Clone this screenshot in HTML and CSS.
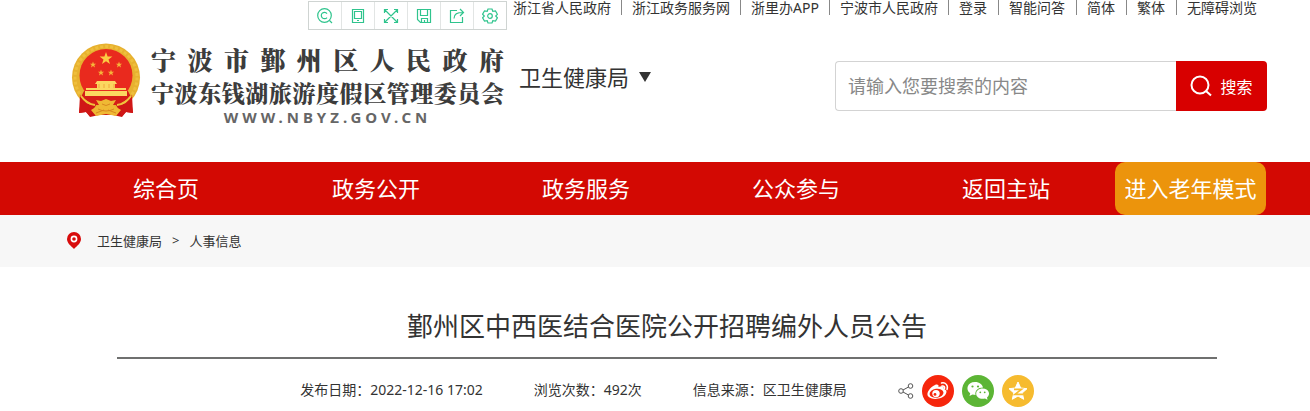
FILE: index.html
```html
<!DOCTYPE html>
<html lang="zh-CN">
<head>
    <meta charset="UTF-8">
    <title>鄞州区中西医结合医院公开招聘编外人员公告</title>
    <link rel="stylesheet" href="styles.css">
</head>
<body>

    <div class="topbar">
        <div class="toolbar">
            <button type="button" aria-label="识别"><svg viewBox="0 0 16 16"><circle cx="7.500" cy="7.500" r="6.800"/><path d="M10 5.500A3.200 3.200 0 1 0 10 9.500M12.500 12.500L15 15"/></svg></button>
            <button type="button" aria-label="手机"><svg viewBox="0 0 16 16"><path d="M2.500 1.500h11v13h-11zM4.500 3.500h7v7h-7zM7 12.500h2"/></svg></button>
            <button type="button" aria-label="全屏"><svg viewBox="0 0 16 16"><path d="M2 2l12 12M14 2L2 14M1.500 5V1.500H5M11 1.500h3.500V5M14.500 11v3.500H11M5 14.500H1.500V11"/></svg></button>
            <button type="button" aria-label="保存"><svg viewBox="0 0 16 16"><path d="M1.500 1.500h13v13h-10l-3-3zM4.500 2v5.500h7V2M5.500 14v-3.500h6V14M8.500 12v2"/></svg></button>
            <button type="button" aria-label="分享"><svg viewBox="0 0 16 16"><path d="M8 2.500H1.500v12h12V9M5 10.500C5 6 8 4.500 14 4.500M11 1l3.500 3.500L11 8"/></svg></button>
            <button type="button" aria-label="设置"><svg viewBox="0 0 16 16"><path d="M6 1h4l.8 2.300 2.700-.4 1.900 3.400L13.700 8l1.700 1.800-1.900 3.300-2.700-.4L10 15H6l-.8-2.300-2.700.4L.6 9.800 2.300 8 .6 6.200l1.900-3.300 2.700.4z"/><circle cx="8" cy="8" r="2.300"/></svg></button>
        </div>
        <div class="top-links">
            <a href="#">浙江省人民政府</a>
            <a href="#">浙江政务服务网</a>
            <a href="#">浙里办APP</a>
            <a href="#">宁波市人民政府</a>
            <a href="#">登录</a>
            <a href="#">智能问答</a>
            <a href="#">简体</a>
            <a href="#">繁体</a>
            <a href="#">无障碍浏览</a>
        </div>
    </div>

    <div class="header">
        <a href="#" class="logo">
            <svg class="emblem" viewBox="0 0 70 75">
                <path d="M11 51L8 70l7-1 4 5 9-2h14l9 2 4-5 7 1-3-19z" fill="#c91413"/>
                <circle cx="35" cy="34.500" r="34" fill="#e7b12f"/>
                <circle cx="35" cy="34.500" r="31" fill="none" stroke="#efbf3d" stroke-width="3" stroke-dasharray="3 2"/>
                <circle cx="35" cy="32.500" r="26.500" fill="#e92a1e"/>
                <path d="M13 48h44l3 6-12 8H22l-12-8z" fill="#d51d18"/>
                <path d="M35 9l1.600 4.500h4.800l-3.900 2.900 1.500 4.600-4-2.800-4 2.800 1.500-4.600-3.900-2.900h4.800z" fill="#fccb42"/>
                <g fill="#f6b63a">
                    <path id="star" d="M22 18.500l.8 2.200h2.400l-1.900 1.400.7 2.300-2-1.400-2 1.400.7-2.300-1.900-1.400h2.400z"/>
                    <use href="#star" x="26"/>
                    <use href="#star" x="8" y="8"/>
                    <use href="#star" x="18" y="8"/>
                </g>
                <path d="M26 38h18l2 3h-2v4h11v2H15v-2h11v-4h-2zM14 48h42v5H14z" fill="#fbd760"/>
                <path d="M28 41v4M33 41v4M38 41v4M43 41v4" stroke="#f0a93a"/>
                <path d="M9 52q5 11 16 10l-6 11-4-4-7 1zM61 52q-5 11-16 10l6 11 4-4 7 1z" fill="#d01716"/>
                <path d="M10 53q6 8 14 9M60 53q-6 8-14 9" fill="none" stroke="#f0c33d" stroke-width="2"/>
                <path d="M35 56l5 2 5-1-3 5 8 5-5 6-10-2-10 2-5-6 8-5-3-5 5 1z" fill="#efb934"/>
                <path d="M31 61q4 3 8 0M27 66q8 4 16 0M25 70l8-3M45 70l-8-3" fill="none" stroke="#d8881f"/>
            </svg>
            <span class="logo-text">
                <span class="logo-line large">宁波市鄞州区人民政府</span>
                <span class="logo-line">宁波东钱湖旅游度假区管理委员会</span>
                <span class="logo-url">WWW.NBYZ.GOV.CN</span>
            </span>
        </a>
        <button type="button" class="dept">卫生健康局<svg viewBox="0 0 12 10"><path d="M0 0h12L6 10z"/></svg></button>
        <form class="search">
            <input type="text" placeholder="请输入您要搜索的内容" aria-label="搜索内容">
            <button type="submit"><svg viewBox="0 0 22 22"><circle cx="10" cy="10" r="8.500"/><path d="M16 16l5 4.500"/></svg>搜索</button>
        </form>
    </div>

    <div class="nav">
        <a href="#">综合页</a>
        <a href="#">政务公开</a>
        <a href="#">政务服务</a>
        <a href="#">公众参与</a>
        <a href="#">返回主站</a>
        <a href="#" class="old-mode">进入老年模式</a>
    </div>

    <div class="crumbs">
        <svg viewBox="0 0 14 17"><path d="M7 0a7 7 0 0 1 7 7c0 4-4 7-7 10C4 14 0 11 0 7a7 7 0 0 1 7-7z" fill="#d80c0c"/><circle cx="7" cy="7" r="2.600" fill="#d80c0c" stroke="#fff" stroke-width="1.600"/></svg>
        <a href="#">卫生健康局</a>
        <span>&gt;</span>
        <a href="#">人事信息</a>
    </div>

    <div class="article">
        <h1>鄞州区中西医结合医院公开招聘编外人员公告</h1>
        <div class="meta">
            <span>发布日期：2022-12-16 17:02</span>
            <span>浏览次数：492次</span>
            <span>信息来源：区卫生健康局</span>
            <div class="share">
                <svg class="share-icon" viewBox="0 0 16 16"><circle cx="3" cy="8" r="2.300"/><circle cx="12.500" cy="3" r="2.300"/><circle cx="12.500" cy="13" r="2.300"/><path d="M5 7l5.500-3M5 9l5.500 3"/></svg>
                <a href="#" aria-label="微博">
                    <svg viewBox="0 0 32 32">
                        <circle cx="16" cy="16" r="16" fill="#f6260c"/>
                        <path d="M13 10c2-1 4-.5 3.500 2 3-1.200 6-1 5.300 2 2.500.8 3.500 2.500 2 5-3 5.500-14 6.500-17.500 2.500C3.500 18.500 8 12 13 10z" fill="#fff"/>
                        <ellipse cx="14.500" cy="18.300" rx="7" ry="4.500" fill="#f6260c" transform="rotate(-8 14 18)"/>
                        <circle cx="14" cy="18.600" r="3.700" fill="#fff"/>
                        <circle cx="13" cy="19.400" r="1.400" fill="#f6260c"/>
                        <path d="M19.500 8c4-1 7 2.500 5.500 6.500M20 11c2-.4 3 1 2.500 2.500" fill="none" stroke="#fff" stroke-width="1.500" stroke-linecap="round"/>
                    </svg>
                </a>
                <a href="#" aria-label="微信">
                    <svg viewBox="0 0 32 32">
                        <circle cx="16" cy="16" r="16" fill="#5cb535"/>
                        <path d="M13 7c4.500 0 7.500 2.500 8 5.500-5 0-8.500 3.500-7.500 7.500l-3-.5L7.500 21l.7-2.800C3 14.500 5.500 7 13 7z" fill="#fff"/>
                        <path d="M20.500 13.500c6.500 0 8.500 6 4.500 9l.5 2.200-2.500-1.200c-5 1.200-8.800-1.500-8.800-4.800 0-3 2.800-5.200 6.300-5.200z" fill="#fff"/>
                        <g fill="#5cb535"><circle cx="10.500" cy="11.500" r="1.100"/><circle cx="16" cy="11.500" r="1.100"/><circle cx="18.300" cy="17.300" r=".9"/><circle cx="22.700" cy="17.300" r=".9"/></g>
                    </svg>
                </a>
                <a href="#" aria-label="QQ空间">
                    <svg viewBox="0 0 32 32">
                        <circle cx="16" cy="16" r="16" fill="#f6bb2f"/>
                        <path d="M16 7l2.700 6 6.300.7-4.800 4.300 1.500 6.300-5.700-3.300-5.700 3.300 1.500-6.300L7 13.700l6.300-.7z" fill="#fff" stroke="#fff" stroke-linejoin="round"/>
                        <path d="M12 14.300h7.500l-6.500 5h8" fill="none" stroke="#f6bb2f" stroke-width="1.700"/>
                    </svg>
                </a>
            </div>
        </div>
    </div>

</body>
</html>
```
FILE: styles.css
```css
body { margin: 0; background: #fff; color: #333; font-family: "Noto Sans", "Noto Sans CJK SC", sans-serif; font-size: 14px; }
a { color: inherit; text-decoration: none; }
button { font-family: inherit; border: none; cursor: pointer; }
svg { display: block; flex: none; }

.topbar { display: flex; justify-content: flex-end; align-items: flex-start; gap: 6px; height: 30px; padding-right: 43px; }
.toolbar { display: flex; margin-top: 1px; border: 1px solid #cfd4d2; box-sizing: border-box; height: 29px; }
.toolbar button { display: flex; align-items: center; justify-content: center; box-sizing: border-box; width: 33px; padding: 0; background: #fff; border-right: 1px solid #e2e5e4; }
.toolbar button:last-child { width: 32px; border-right: none; }
.toolbar svg { width: 16px; height: 16px; fill: none; stroke: #2fc48d; stroke-width: 1.2; }
.top-links { display: flex; }
.top-links a { padding: 0 10px; line-height: 15px; height: 15px; border-right: 1px solid #888; white-space: nowrap; }
.top-links a:nth-child(n+5) { padding-right: 11px; }
.top-links a:first-child { padding-left: 0; }
.top-links a:last-child { padding-right: 10px; border-right: none; }

.header { display: flex; align-items: flex-start; height: 132px; padding: 0 43px 0 71px; }
.logo { display: flex; gap: 10px; margin-top: 13px; }
.emblem { width: 70px; height: 75px; }
.logo-text { display: block; width: 353px; color: #3c3c3c; }
.logo-line { display: block; font-family: "Noto Serif CJK SC", "Noto Sans CJK SC", serif; font-size: 23px; font-weight: 900; line-height: 33px; text-align: justify; text-align-last: justify; white-space: nowrap; }
.logo-line.large { font-size: 25px; }
.logo-url { display: block; font-size: 15px; font-weight: bold; line-height: 16px; letter-spacing: 4px; text-align: center; color: #666; }
.dept { display: flex; align-items: center; gap: 10px; margin-left: 15px; margin-top: 31px; padding: 0; background: none; color: #333; font-size: 22px; line-height: 32px; white-space: nowrap; }
.dept svg { width: 12px; height: 10px; fill: #333; }
.search { display: flex; width: 432px; height: 50px; margin-left: auto; margin-top: 31px; }
.search input { flex: 1; min-width: 0; box-sizing: border-box; padding: 0 12px; border: 1px solid #d3d3d3; border-right: none; border-radius: 4px 0 0 4px; font-family: inherit; font-size: 18px; outline: none; }
.search input::placeholder { color: #888; }
.search button { display: flex; align-items: center; justify-content: center; gap: 8px; width: 91px; padding: 0; background: #d80000; color: #fff; font-size: 16px; border-radius: 0 4px 4px 0; }
.search button svg { width: 22px; height: 22px; fill: none; stroke: #fff; stroke-width: 2; }

.nav { display: flex; height: 53px; padding: 0 44px 0 61px; background: #d30903; color: #fff; font-size: 22px; line-height: 53px; text-align: center; white-space: nowrap; }
.nav a { flex: 1; }
.nav .old-mode { flex: none; width: 151px; margin-left: 4px; background: #ec940c; border-radius: 10px; }

.crumbs { display: flex; align-items: center; gap: 10px; height: 50px; padding: 0 67px 2px; background: #f7f7f7; font-size: 13px; }
.crumbs svg { width: 14px; height: 17px; margin-right: 6px; }

.article { margin: 0 93px 0 117px; }
.article h1 { margin: 0; padding: 39px 0 11px; border-bottom: 2px solid #6f706f; font-size: 26px; font-weight: normal; line-height: 40px; text-align: center; }
.meta { display: flex; align-items: center; justify-content: center; gap: 51px; margin-top: 16px; white-space: nowrap; }
.meta > span { padding-bottom: 4px; }
.share { display: flex; align-items: center; gap: 8px; }
.share a svg { width: 32px; height: 32px; }
.share-icon { width: 16px; height: 16px; fill: none; stroke: #555; }
```
